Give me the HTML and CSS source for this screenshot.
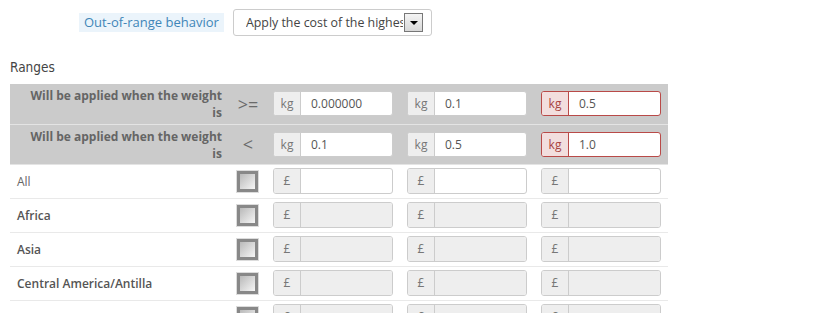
FILE: index.html
```html
<!DOCTYPE html>
<html lang="en">
<head>
    <meta charset="UTF-8">
    <title>Ranges</title>
    <link rel="stylesheet" href="styles.css">
</head>
<body>
    <div class="page">
        <div class="form-row">
            <label class="form-label">Out-of-range behavior</label>
            <div class="select">
                <span class="select-text">Apply the cost of the highest defined range</span>
                <span class="select-arrow"></span>
            </div>
        </div>

        <h4 class="section-title">Ranges</h4>

        <table class="ranges">
            <colgroup>
                <col class="c-label">
                <col class="c-op">
                <col class="c-range">
                <col class="c-range">
                <col class="c-range-last">
            </colgroup>
            <tr class="range-head">
                <td class="head-label">Will be applied when the weight is</td>
                <td class="op">&gt;=</td>
                <td><div class="group"><span class="addon">kg</span><span class="field">0.000000</span></div></td>
                <td><div class="group"><span class="addon">kg</span><span class="field">0.1</span></div></td>
                <td><div class="group error"><span class="addon">kg</span><span class="field">0.5</span></div></td>
            </tr>
            <tr class="range-head">
                <td class="head-label">Will be applied when the weight is</td>
                <td class="op">&lt;</td>
                <td><div class="group"><span class="addon">kg</span><span class="field">0.1</span></div></td>
                <td><div class="group"><span class="addon">kg</span><span class="field">0.5</span></div></td>
                <td><div class="group error"><span class="addon">kg</span><span class="field">1.0</span></div></td>
            </tr>
            <tr class="zone all">
                <td class="zone-name">All</td>
                <td class="check-cell"><span class="check"></span></td>
                <td><div class="group"><span class="addon">£</span><span class="field"></span></div></td>
                <td><div class="group"><span class="addon">£</span><span class="field"></span></div></td>
                <td><div class="group"><span class="addon">£</span><span class="field"></span></div></td>
            </tr>
            <tr class="zone">
                <td class="zone-name">Africa</td>
                <td class="check-cell"><span class="check"></span></td>
                <td><div class="group disabled"><span class="addon">£</span><span class="field"></span></div></td>
                <td><div class="group disabled"><span class="addon">£</span><span class="field"></span></div></td>
                <td><div class="group disabled"><span class="addon">£</span><span class="field"></span></div></td>
            </tr>
            <tr class="zone">
                <td class="zone-name">Asia</td>
                <td class="check-cell"><span class="check"></span></td>
                <td><div class="group disabled"><span class="addon">£</span><span class="field"></span></div></td>
                <td><div class="group disabled"><span class="addon">£</span><span class="field"></span></div></td>
                <td><div class="group disabled"><span class="addon">£</span><span class="field"></span></div></td>
            </tr>
            <tr class="zone">
                <td class="zone-name">Central America/Antilla</td>
                <td class="check-cell"><span class="check"></span></td>
                <td><div class="group disabled"><span class="addon">£</span><span class="field"></span></div></td>
                <td><div class="group disabled"><span class="addon">£</span><span class="field"></span></div></td>
                <td><div class="group disabled"><span class="addon">£</span><span class="field"></span></div></td>
            </tr>
            <tr class="zone">
                <td class="zone-name">Europe</td>
                <td class="check-cell"><span class="check"></span></td>
                <td><div class="group disabled"><span class="addon">£</span><span class="field"></span></div></td>
                <td><div class="group disabled"><span class="addon">£</span><span class="field"></span></div></td>
                <td><div class="group disabled"><span class="addon">£</span><span class="field"></span></div></td>
            </tr>
        </table>
    </div>
</body>
</html>
```

FILE: styles.css
```css
body {
    margin: 0;
    padding: 0;
    font-family: "Open Sans", "Liberation Sans", sans-serif;
    font-size: 12px;
    color: #555;
    background: #fff;
}
.page {
    padding: 9px 0 0 10px;
    width: 658px;
}
.form-row {
    display: flex;
    align-items: center;
    padding-left: 69px;
}
.form-label {
    background: #ebf4fb;
    color: #3f86b8;
    font-size: 13px;
    padding: 0 5px;
    height: 19px;
    line-height: 19px;
    margin-right: 9px;
}
.select {
    display: flex;
    align-items: center;
    width: 199px;
    height: 27px;
    border: 1px solid #ccc;
    border-radius: 3px;
    padding-left: 12px;
    box-sizing: border-box;
    font-size: 12.4px;
    color: #444;
}
.select-text {
    width: 157px;
    overflow: hidden;
    white-space: nowrap;
}
.select-arrow {
    position: relative;
    width: 17px;
    height: 17px;
    border: 1px solid #777;
    background: linear-gradient(#f4f4f4, #d8d8d8);
    margin-left: 1px;
}
.select-arrow::after {
    content: "";
    position: absolute;
    left: 5px;
    top: 7px;
    border-left: 4px solid transparent;
    border-right: 4px solid transparent;
    border-top: 4px solid #000;
}
.section-title {
    margin: 22px 0 8px;
    font-family: "DejaVu Sans Condensed", "DejaVu Sans", sans-serif;
    font-stretch: condensed;
    font-weight: normal;
    font-size: 13.5px;
    color: #444;
    line-height: 18px;
}
.ranges {
    border-collapse: collapse;
    width: 658px;
    table-layout: fixed;
}
.c-label { width: 218px; }
.c-op { width: 40px; }
.c-range { width: 134px; }
.c-range-last { width: 132px; }
.ranges td {
    padding: 0;
    box-sizing: border-box;
}
.range-head td {
    background: #cbcbcb;
    height: 40px;
    border-bottom: 1px solid #e4e4e4;
}
.range-head:nth-child(3) td { border-bottom: none; height: 40px; }
.ranges td.head-label {
    text-align: right;
    font-weight: bold;
    color: #656565;
    line-height: 17px;
    padding: 1px 6px 0 20px;
}
.op {
    text-align: center;
    font-size: 18px;
    color: #6a6a6a;
}
.zone td {
    height: 34px;
    border-bottom: 1px solid #e9e9e9;
}
.ranges td.zone-name {
    padding-left: 7px;
    font-weight: 600;
    color: #555;
}
.ranges .all td.zone-name {
    font-weight: normal;
    color: #666;
}
.ranges td.check-cell {
    padding-left: 9px;
}
.check {
    display: block;
    width: 15px;
    height: 15px;
    border: 3px solid #888;
    background: linear-gradient(135deg, #b9b9b9, #f6f6f6);
    box-shadow: 0 0 0 1px #dcdcdc;
}
.group {
    display: flex;
    width: 120px;
    height: 25px;
    margin-left: 5px;
    border: 1px solid #ccc;
    border-radius: 3px;
    box-sizing: border-box;
    background: #fff;
    overflow: hidden;
}
.zone .group { height: 26px; }
.addon {
    width: 26px;
    flex: none;
    background: #eee;
    border-right: 1px solid #ccc;
    text-align: center;
    line-height: 23px;
    color: #777;
}
.field {
    flex: 1;
    padding-left: 10px;
    line-height: 23px;
    color: #555;
}
.group.disabled .field { background: #eee; }
.group.error { border-color: #b94a48; }
.group.error .addon {
    background: #f2dede;
    border-right-color: #b94a48;
    color: #a94442;
}
```
